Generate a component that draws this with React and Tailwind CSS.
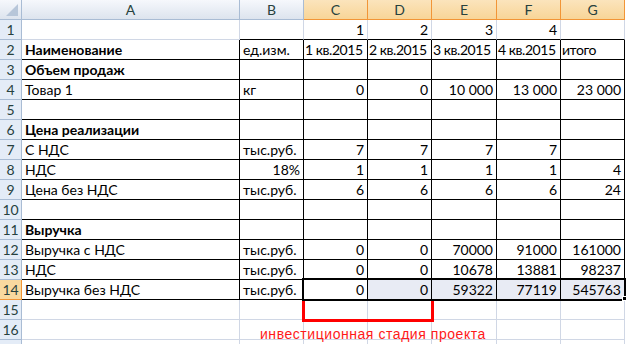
import React from "react";

const cols = ["A", "B", "C", "D", "E", "F", "G"];
const selCols = ["C", "D", "E", "F", "G"];

// each row: [A, B, C, D, E, F, G], bold flag for A
const rows = [
  { n: 1, cells: ["", "", "1", "2", "3", "4", ""] },
  { n: 2, cells: ["Наименование", "ед.изм.", "1 кв.2015", "2 кв.2015", "3 кв.2015", "4 кв.2015", "итого"], bold: true, head: true },
  { n: 3, cells: ["Объем продаж", "", "", "", "", "", ""], bold: true },
  { n: 4, cells: ["Товар 1", "кг", "0", "0", "10 000", "13 000", "23 000"] },
  { n: 5, cells: ["", "", "", "", "", "", ""] },
  { n: 6, cells: ["Цена реализации", "", "", "", "", "", ""], bold: true },
  { n: 7, cells: ["С НДС", "тыс.руб.", "7", "7", "7", "7", ""] },
  { n: 8, cells: ["НДС", "18%", "1", "1", "1", "1", "4"], rightB: true },
  { n: 9, cells: ["Цена без НДС", "тыс.руб.", "6", "6", "6", "6", "24"] },
  { n: 10, cells: ["", "", "", "", "", "", ""] },
  { n: 11, cells: ["Выручка", "", "", "", "", "", ""], bold: true },
  { n: 12, cells: ["Выручка с НДС", "тыс.руб.", "0", "0", "70000", "91000", "161000"] },
  { n: 13, cells: ["НДС", "тыс.руб.", "0", "0", "10678", "13881", "98237"] },
  { n: 14, cells: ["Выручка без НДС", "тыс.руб.", "0", "0", "59322", "77119", "545763"] },
  { n: 15, cells: ["", "", "", "", "", "", ""] },
  { n: 16, cells: ["", "", "", "", "", "", ""] },
  { n: 17, cells: ["", "", "", "", "", "", ""], noLabel: true },
];

function ColHeader({ c }) {
  const sel = selCols.includes(c);
  return (
    <div
      className={
        "h-5 flex items-center justify-center border-r border-b text-[14px] " +
        (sel
          ? "bg-gradient-to-b from-[#fbe4bc] to-[#f8d597] border-[#f29536] text-[#27413e]"
          : "bg-gradient-to-b from-[#f6f8fc] to-[#dde4ee] border-[#a9bcd4] text-[#27413e]")
      }
    >
      {c}
    </div>
  );
}

function Cell({ row, ci, value }) {
  const boxed = row.n >= 2 && row.n <= 14;
  const topEdge = row.n === 1 && ci >= 1;
  const right = boxed ? "border-r-black" : "border-r-[#d0d7e5]";
  const bottom = boxed || topEdge ? "border-b-black" : "border-b-[#d0d7e5]";
  const isNum = ci >= 2 || (ci === 1 && row.rightB);
  const bold = ci === 0 && row.bold;
  let bg = "bg-white";
  if (row.n === 14 && ci >= 3) bg = "bg-[#e8ebf4]";
  const tight = row.head && ci >= 2;
  return (
    <div
      className={
        "h-5 border-r border-b overflow-hidden whitespace-nowrap flex items-center text-[14px] text-black " +
        right + " " + bottom + " " + bg + " " +
        (isNum && !row.head ? "justify-end" : "justify-start") + " " +
        (bold ? "font-bold" : "") + " " +
        (tight ? "px-[1px] tracking-[-0.45px]" : "px-[3px]")
      }
    >
      {value}
    </div>
  );
}

export default function App() {
  return (
    <div className="relative w-[626px] h-[344px] overflow-hidden bg-white" style={{ fontFamily: "Lato, 'Liberation Sans', sans-serif" }}>
      <div className="grid grid-cols-[22px_218px_64px_64px_64px_65px_64px_64px]">
        <div className="h-5 border-r border-b border-[#a9bcd4] bg-gradient-to-b from-[#f6f8fc] to-[#dde4ee] relative">
          <div className="absolute right-[3px] bottom-[3px] w-0 h-0 border-l-[12px] border-l-transparent border-b-[12px] border-b-[#b7c6d9]" />
        </div>
        {cols.map((c) => (
          <ColHeader key={c} c={c} />
        ))}
        {rows.map((row) => (
          <React.Fragment key={row.n}>
            <div
              className={
                "h-5 border-r border-b flex items-center justify-center text-[14px] text-[#27413e] " +
                (row.n === 14
                  ? "bg-[#f9d99f] border-[#f29536]"
                  : "bg-[#e4ecf7] border-[#a9bcd4]")
              }
            >
              {row.noLabel ? "" : row.n}
            </div>
            {row.cells.map((v, ci) => (
              <Cell key={ci} row={row} ci={ci} value={v} />
            ))}
          </React.Fragment>
        ))}
      </div>

      {/* selection frame C14:G14 */}
      <div className="absolute left-[302px] top-[278px] w-[324px] h-[23px] border-2 border-black pointer-events-none" />
      <div className="absolute left-[622px] top-[296px] w-[5px] h-[5px] bg-black border border-white" />

      {/* red bracket */}
      <div className="absolute left-[302px] top-[301px] w-[132px] h-[21px] border-l-[3px] border-r-[3px] border-b-[3px] border-[#ff0000]" />
      <div className="absolute left-[260px] top-[324px] text-[14px] tracking-[0.55px] text-[#ff1a1a]" style={{ fontFamily: "'Liberation Sans', sans-serif" }}>
        инвестиционная стадия проекта
      </div>
    </div>
  );
}
